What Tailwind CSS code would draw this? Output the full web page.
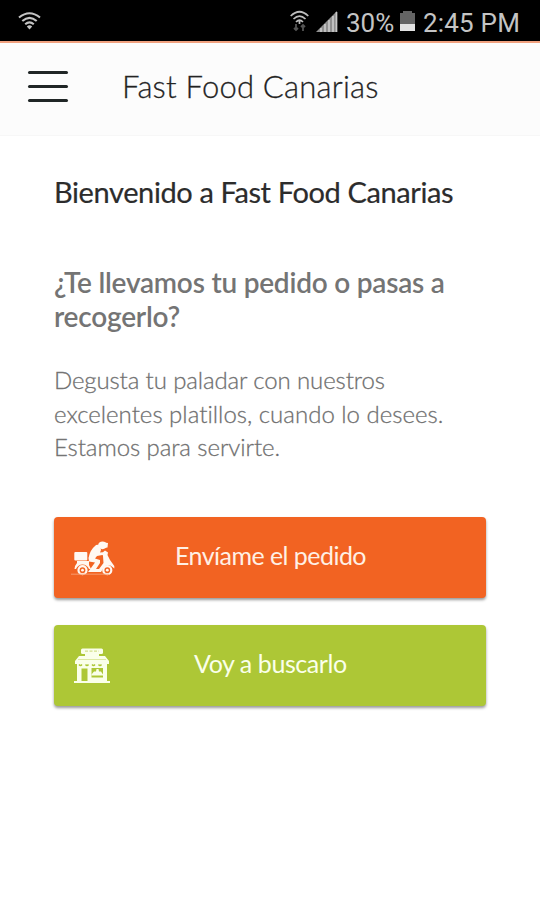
<!DOCTYPE html>
<html lang="es">
<head>
<meta charset="utf-8">
<meta name="viewport" content="width=device-width, initial-scale=1">
<title>Fast Food Canarias</title>
<script src="https://cdn.jsdelivr.net/npm/@tailwindcss/browser@4"></script>
</head>
<body class="h-[900px] w-[540px] overflow-hidden bg-white font-['Lato',sans-serif]">
<div class="flex h-[41px] items-center bg-black pt-[5px] pl-[18px] pr-5 font-['Roboto',sans-serif] text-[26px] text-[#c4c4c4]">
  <svg class="-mt-1 h-[20px] w-[23px]" viewBox="0 0 23 20" fill="none" stroke="#c4c4c4" stroke-width="2.1"><path d="M1 6.5Q11.500-2 22 6.500M4.300 10Q11.500 3.600 18.700 10M7.200 13.300Q11.500 9.500 15.800 13.300"/><path d="M8.800 15.400Q11.500 13.200 14.200 15.400L11.500 18.500Z" fill="#c4c4c4" stroke="none"/></svg>
  <div class="flex-1"></div>
  <svg class="mr-[7px] -mt-1 h-[23px] w-[19px]" viewBox="0 0 19 23" fill="none" stroke="#bdbdbd" stroke-width="1.700"><path d="M.7 6Q9.500-2.500 18.300 6M3.500 9Q9.500 3.300 15.500 9M6 12Q9.500 8.500 13 12M9.500 11v3"/><path d="M6 14v6M4 18l2 2 2-2M13 21v-6M11 17l2-2 2 2" stroke="#555" stroke-width="1.800"/></svg>
  <svg class="mr-[8px] -mt-[3px] h-[22px] w-[22px]" viewBox="0 0 22 22"><path d="M0 21L21 0V21Z" fill="#909090"/><path d="M5 17v4M9 13v8M13 9v12M17 5v16M20.500 1v20" stroke="#c9c9c9" stroke-width="1.700"/></svg>
  <span class="w-[49px] whitespace-nowrap">30%</span>
  <svg class="mr-[8px] ml-[5px] -mt-[4px] h-[22px] w-[15px]" viewBox="0 0 15 22"><path d="M0 3H3V1H12V3H15V21H0Z" fill="#646464"/><path d="M0 14H15V21H0Z" fill="#e2e2e2"/></svg>
  <span class="w-[97px] whitespace-nowrap tracking-[.2px]">2:45 PM</span>
</div>
<header class="flex h-[95px] items-center border-t-2 border-b border-t-[#f0a17f] border-b-[#f7f7f7] bg-[#fcfcfc] pl-7">
  <div class="flex h-[31px] w-10 flex-col justify-between -mt-[5px]"><i class="h-[3px] rounded-full bg-[#202626]"></i><i class="h-[3px] rounded-full bg-[#202626]"></i><i class="h-[3px] rounded-full bg-[#202626]"></i></div>
  <h1 class="-mt-[7px] ml-[54px] whitespace-nowrap text-[31px] leading-[36px] font-light tracking-[.22px] text-[#202020] [-webkit-text-stroke:.3px_#303030]">Fast Food Canarias</h1>
</header>
<main class="px-[54px] pt-[38px] whitespace-nowrap">
  <h2 class="text-[29px] leading-[36px] font-normal tracking-[-.39px] text-[#2c2c2c] [-webkit-text-stroke:.2px_#2c2c2c]">Bienvenido a Fast Food Canarias</h2>
  <h3 class="mt-[55px] text-[28px] leading-[34px] font-semibold tracking-[-.22px] text-[#747474]"><span>¿Te llevamos tu pedido o pasas a</span><br><span>recogerlo?</span></h3>
  <p class="mt-[30px] text-[24px] leading-[33.500px] font-light text-[#686868] [-webkit-text-stroke:.3px_#808080]"><span class="tracking-[-.12px]">Degusta tu paladar con nuestros</span><br><span class="tracking-[.01px]">excelentes platillos, cuando lo desees.</span><br><span class="tracking-[-.08px]">Estamos para servirte.</span></p>
  <button class="mt-[53px] flex h-[81px] w-[432px] items-center rounded-[4px] bg-[#f26322] pl-[17px] text-left text-[25px] text-[#fff0e5] shadow-[0_2px_3px_rgba(0,0,0,.4)]">
    <svg class="mt-1 h-[36px] w-[44px]" viewBox="0 0 44 36" fill="#fff8f2">
      <rect x="3.300" y="11" width="13" height="8.500" rx="1"/>
      <path d="M6 20H18V24L20 28H18Q16 23.500 11.500 23.500Q7 23.500 5 28H3.500Q4 24 6 22Z"/>
      <path d="M24 5Q26 2.500 29 5L30 9L29 11.500L34 11V13.500L26 15L24 17.500L29 19V22L25 28H28L32.500 22L32 15L31 12L34 9.500L37 11.500L36.500 14L39 19L43.300 25V27.500L41.500 26Q37 22 33 26L30 31H17L20 27L24 21.500L18 20.500L17.500 17Q19 9 24 5Z"/>
      <ellipse cx="31.500" cy="4.300" rx="4.400" ry="3.900"/><path d="M30 1L37 2L36.500 6.500L33 7Z"/>
      <g fill="#f26322" stroke="#fff8f2" stroke-width="2.200"><circle cx="11.500" cy="29.200" r="4"/><circle cx="36.300" cy="29.200" r="4"/></g><circle cx="11.500" cy="29.200" r="1.400"/><circle cx="36.300" cy="29.200" r="1.400"/><path d="M0 33.200H38" stroke="#f79a6d" stroke-width="1"/>
    </svg>
    <span class="ml-[60px] -mt-[2px] tracking-[-.54px]">Envíame el pedido</span>
  </button>
  <button class="mt-[27px] flex h-[81px] w-[432px] items-center rounded-[4px] bg-[#adc736] pl-[20px] text-left text-[25px] text-[#faffea] shadow-[0_2px_3px_rgba(0,0,0,.4)]">
    <svg class="h-[37px] w-[36px]" viewBox="0 0 36 37" fill="#faffea">
      <rect x="7" y="1.500" width="22" height="5.500" rx="1.500"/><path d="M11 7H25V9H11ZM5 9H31L35 14V17H1V14Z"/>
      <path d="M11 4.200H25" stroke="#d2e08a" stroke-width="1.300" stroke-dasharray="3 1.500"/>
      <path d="M4 12.500H32" stroke="#d5e38f" stroke-width=".8"/>
      <path d="M3 17H33V35H3Z"/>
      <path d="M5 17.500Q6.500 19.500 8 17.500M11.500 17.500Q13 19.500 14.500 17.500M18 17.500Q19.500 19.500 21 17.500M24.500 17.500Q26 19.500 27.500 17.500" stroke="#adc736" stroke-width="1.300" fill="none"/>
      <path d="M7.500 21.500H13.500V34H7.500ZM17.500 21H29V30.500H17.500Z" fill="#adc736"/>
      <path d="M17.500 27.500L20 24.500H22L22.500 22H24.500L25 24.500H27L29 27.500V28.500H17.500Z"/><path d="M0 34H36V36H0Z"/>
    </svg>
    <span class="ml-[84px] -mt-[3px] tracking-[-.42px]">Voy a buscarlo</span>
  </button>
</main>
</body>
</html>
